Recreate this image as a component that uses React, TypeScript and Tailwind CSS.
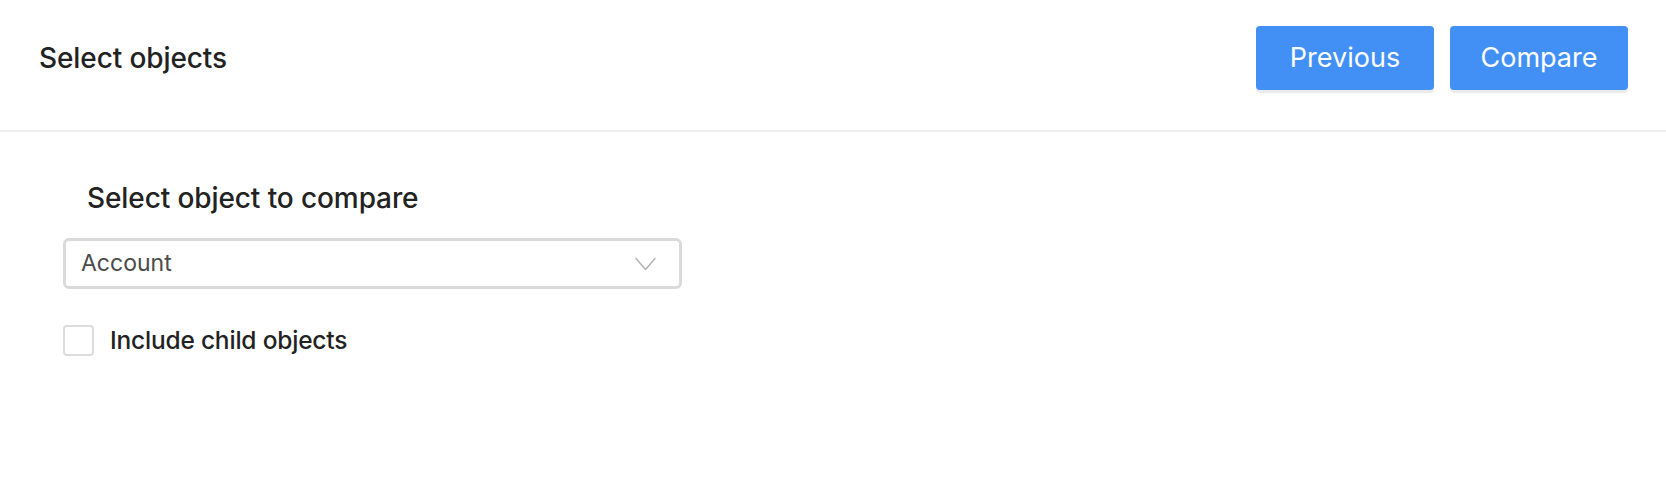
import { useState } from "react";

const font = { fontFamily: "Inter, 'Noto Sans', sans-serif" };

function Chevron() {
  return (
    <svg width="21" height="14" viewBox="0 0 21 14" fill="none" aria-hidden="true">
      <path d="M1 1.5 10.5 12.5 20 1.5" stroke="#b3b3b3" strokeWidth="1.5" strokeLinecap="round" strokeLinejoin="round" />
    </svg>
  );
}

export default function App() {
  const [checked, setChecked] = useState(false);

  return (
    <div className="min-h-[494px] w-full bg-white text-[#222222]" style={font}>
      <header className="flex items-center justify-between border-b-2 border-[#efefef] pt-[26px] pb-[40px] pl-[39px] pr-[38px]">
        <h1 className="text-[28px] font-medium tracking-[-0.1px]">Select objects</h1>
        <div className="flex gap-4">
          <button className="h-[64px] w-[178px] rounded-[4px] bg-[#4290f5] text-[27px] text-white shadow-[0_3px_0_#ececec]">
            Previous
          </button>
          <button className="h-[64px] w-[178px] rounded-[4px] bg-[#4290f5] text-[27px] text-white shadow-[0_3px_0_#ececec]">
            Compare
          </button>
        </div>
      </header>

      <main className="flex flex-col pl-[63px] pt-[48px]">
        <h2 className="pl-[24px] text-[28px] font-medium leading-[36px] tracking-[-0.1px]">
          Select object to compare
        </h2>
        <div className="mt-[22px] flex h-[51px] w-[619px] items-center justify-between rounded-[6px] border-[3px] border-[#dadada] pl-[15px] pr-[23px]">
          <span className="text-[23px] text-[#4a4a4a]">Account</span>
          <Chevron />
        </div>
        <label className="mt-[33px] flex cursor-pointer items-center gap-[16px]">
          <input
            type="checkbox"
            checked={checked}
            onChange={(e) => setChecked(e.target.checked)}
            className="peer sr-only"
          />
          <span className="h-[31px] w-[31px] rounded-[4px] border-2 border-[#dcdcdc] bg-white" />
          <span className="text-[24.5px] font-medium tracking-[-0.2px]">Include child objects</span>
        </label>
      </main>
    </div>
  );
}
